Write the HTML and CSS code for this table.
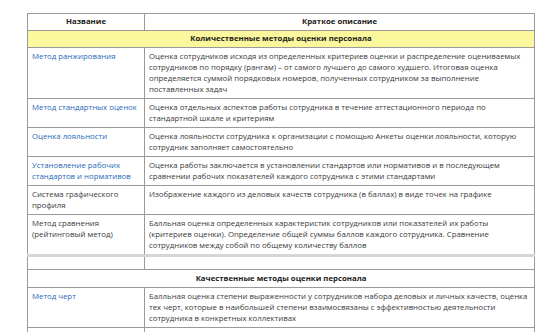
FILE: index.html
```html
<!DOCTYPE html>
<html lang="ru">
<head>
    <meta charset="UTF-8">
    <title>Методы оценки персонала</title>
    <link rel="stylesheet" href="styles.css">
</head>
<body>
    <table class="methods">
        <thead>
            <tr>
                <th class="col-name">Название</th>
                <th>Краткое описание</th>
            </tr>
        </thead>
        <tbody>
            <tr class="group yellow">
                <td colspan="2">Количественные методы оценки персонала</td>
            </tr>
            <tr>
                <td><a href="#">Метод ранжирования</a></td>
                <td>Оценка сотрудников исходя из определенных критериев оценки и распределение оцениваемых сотрудников по порядку (рангам) – от самого лучшего до самого худшего. Итоговая оценка определяется суммой порядковых номеров, полученных сотрудником за выполнение поставленных задач</td>
            </tr>
            <tr>
                <td><a href="#">Метод стандартных оценок</a></td>
                <td>Оценка отдельных аспектов работы сотрудника в течение аттестационного периода по стандартной шкале и критериям</td>
            </tr>
            <tr>
                <td><a href="#">Оценка лояльности</a></td>
                <td>Оценка лояльности сотрудника к организации с помощью Анкеты оценки лояльности, которую сотрудник заполняет самостоятельно</td>
            </tr>
            <tr>
                <td><a href="#">Установление рабочих стандартов и нормативов</a></td>
                <td>Оценка работы заключается в установлении стандартов или нормативов и в последующем сравнении рабочих показателей каждого сотрудника с этими стандартами</td>
            </tr>
            <tr>
                <td>Система графического профиля</td>
                <td>Изображение каждого из деловых качеств сотрудника (в баллах) в виде точек на графике</td>
            </tr>
            <tr class="split">
                <td>Метод сравнения (рейтинговый метод)</td>
                <td>Балльная оценка определенных характеристик сотрудников или показателей их работы (критериев оценки). Определение общей суммы баллов каждого сотрудника. Сравнение сотрудников между собой по общему количеству баллов</td>
            </tr>
            <tr class="empty">
                <td></td>
                <td></td>
            </tr>
            <tr class="group">
                <td colspan="2">Качественные методы оценки персонала</td>
            </tr>
            <tr>
                <td><a href="#">Метод черт</a></td>
                <td>Балльная оценка степени выраженности у сотрудников набора деловых и личных качеств, оценка тех черт, которые в наибольшей степени взаимосвязаны с эффективностью деятельности сотрудника в конкретных коллективах</td>
            </tr>
            <tr>
                <td>Метод заданного выбора</td>
                <td>Выбор экспертами наиболее подходящих характеристик сотрудника из предложенного набора</td>
            </tr>
        </tbody>
    </table>
</body>
</html>
```

FILE: styles.css
```css
body {
    margin: 0;
    padding: 13px 15px 0 27px;
    background-color: white;
    font-family: "Open Sans", Arial, sans-serif;
    font-size: 7.8px;
    line-height: 11px;
    color: #3a3a3a;
}

.methods {
    width: 508px;
    border-collapse: collapse;
    border: 1px solid #9a9a9a;
    border-right-color: #c4c4c4;
}

.methods th,
.methods td {
    border: 1px solid #9a9a9a;
    padding: 3px 4px 3px 4px;
    text-align: left;
    vertical-align: top;
}

.methods th {
    text-align: center;
    font-weight: bold;
    color: #222;
    padding: 2px 4px 3px;
}

.methods .col-name {
    width: 108px;
}

.methods a {
    color: #1f68b8;
    text-decoration: none;
}

.group td {
    text-align: center;
    font-weight: bold;
    color: #222;
    padding: 2px 4px 3px;
}

.yellow td {
    background-color: #fbf79c;
}

.group:not(.yellow) td {
    padding: 3px 4px 3px;
}

.split td {
    border-bottom: 3px solid #d6d6d6;
}

.empty td {
    height: 6px;
}
```
